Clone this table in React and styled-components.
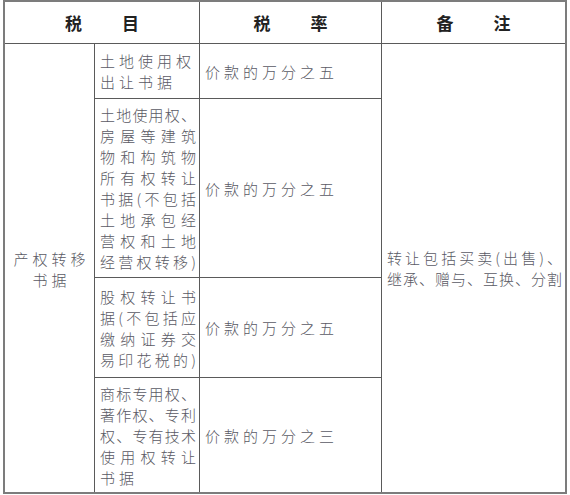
import React from 'react';
import styled, { createGlobalStyle } from 'styled-components';

const GlobalStyle = createGlobalStyle`
  html, body {
    margin: 0;
    padding: 0;
    background: #ffffff;
  }
  body {
    font-family: "Noto Sans CJK SC", "Noto Sans", sans-serif;
  }
`;

const rows = [
  {
    item: [['土地使用权', false], ['出让书据', false]],
    rate: '价款的万分之五',
  },
  {
    item: [
      ['土地使用权、', true],
      ['房屋等建筑', true],
      ['物和构筑物', true],
      ['所有权转让', true],
      ['书据(不包括', true],
      ['土地承包经', true],
      ['营权和土地', true],
      ['经营权转移)', true],
    ],
    rate: '价款的万分之五',
  },
  {
    item: [
      ['股权转让书', true],
      ['据(不包括应', true],
      ['缴纳证券交', true],
      ['易印花税的)', true],
    ],
    rate: '价款的万分之五',
  },
  {
    item: [
      ['商标专用权、', true],
      ['著作权、专利', true],
      ['权、专有技术', true],
      ['使用权转让', true],
      ['书据', false],
    ],
    rate: '价款的万分之三',
  },
];

const App = () => {
  return (
    <>
      <GlobalStyle />
      <Grid>
        <HeadCell $span={2}>
          <HeadText>
            <span>税</span>
            <span>目</span>
          </HeadText>
        </HeadCell>
        <HeadCell>
          <HeadText>
            <span>税</span>
            <span>率</span>
          </HeadText>
        </HeadCell>
        <HeadCell>
          <HeadText>
            <span>备</span>
            <span>注</span>
          </HeadText>
        </HeadCell>

        <CategoryCell>
          <div>产权转移</div>
          <div>书据</div>
        </CategoryCell>

        {rows.map((row, i) => (
          <React.Fragment key={i}>
            <ItemCell $row={i + 2}>
              {row.item.map(([text, full], j) => (
                <Line key={j} $justify={full}>
                  {text}
                </Line>
              ))}
            </ItemCell>
            <RateCell $row={i + 2}>{row.rate}</RateCell>
          </React.Fragment>
        ))}

        <NoteCell>
          <Line $justify>转让包括买卖(出售)、</Line>
          <Line $justify>继承、赠与、互换、分割</Line>
        </NoteCell>
      </Grid>
    </>
  );
};

// Styled components
const Grid = styled.div`
  display: grid;
  grid-template-columns: 89px 104px 181px 183px;
  grid-template-rows: 41px 54px 178px 99px 114px;
  gap: 1px;
  width: 564px;
  box-sizing: border-box;
  margin-left: 3px;
  border: 2px solid #7c7c7c;
  background: #5a5a5a;
  color: #5a5a64;
  font-size: 15px;
  font-weight: 300;
  line-height: 21px;
`;

const Cell = styled.div`
  background: #ffffff;
  display: flex;
  flex-direction: column;
  justify-content: center;
  min-width: 0;
`;

const HeadCell = styled(Cell)`
  grid-column: span ${(p) => p.$span || 1};
  align-items: center;
`;

const HeadText = styled.div`
  display: flex;
  gap: 40px;
  font-size: 17px;
  font-weight: 700;
  color: #222222;
`;

const CategoryCell = styled(Cell)`
  grid-column: 1;
  grid-row: 2 / 6;
  align-items: center;
  text-align: center;
  letter-spacing: 4px;
  padding-left: 4px;
  padding-top: 2px;
`;

const ItemCell = styled(Cell)`
  grid-column: 2;
  grid-row: ${(p) => p.$row};
  padding: 0 3px 0 5px;
`;

const RateCell = styled(Cell)`
  grid-column: 3;
  grid-row: ${(p) => p.$row};
  padding-left: 5px;
  letter-spacing: 4px;
  white-space: nowrap;
`;

const NoteCell = styled(Cell)`
  grid-column: 4;
  grid-row: 2 / 6;
  padding: 0 3px 0 5px;
`;

const Line = styled.div`
  white-space: nowrap;
  text-align: left;
  text-align-last: ${(p) => (p.$justify ? 'justify' : 'left')};
  letter-spacing: ${(p) => (p.$justify ? '0' : '4px')};
`;

export default App;
